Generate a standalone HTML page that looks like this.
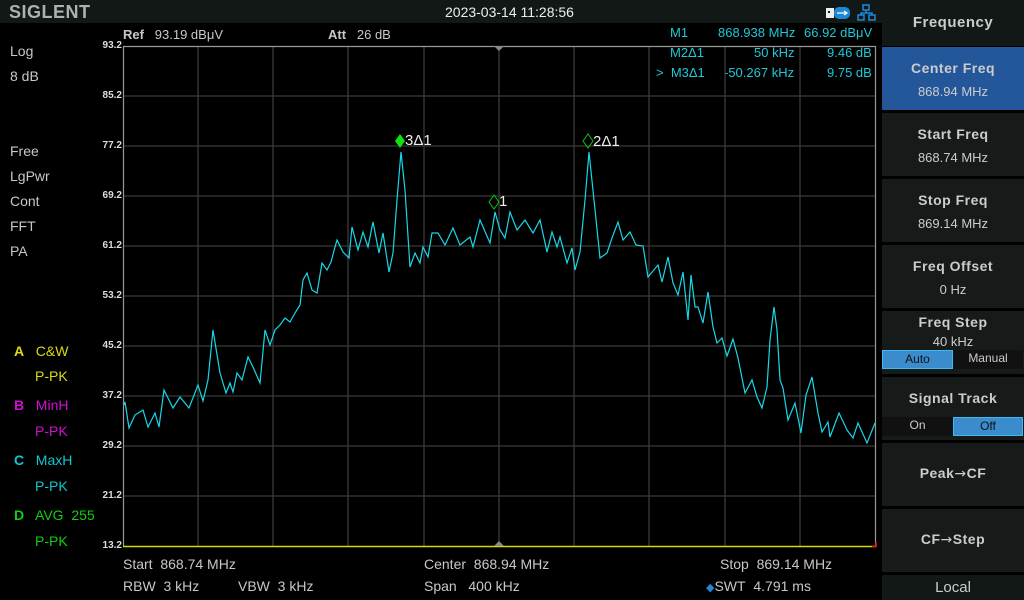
<!DOCTYPE html>
<html><head><meta charset="utf-8"><style>
*{margin:0;padding:0;box-sizing:border-box}
body{width:1024px;height:600px;background:#000;overflow:hidden;position:relative;font-family:"Liberation Sans",Arial,sans-serif;color:#ddd}
.a{position:absolute;white-space:nowrap}
.top{left:0;top:0;width:882px;height:23px;background:#111816}
.lbl{font-size:14px;color:#c8c8c8}
.yl{font-size:10px;font-weight:bold;color:#ddd;right:902px}
.cy{color:#1ec8d8;font-size:13px}
.rp{left:882px;top:0;width:142px;height:600px;background:#000}
.btn{position:absolute;left:882px;width:142px;background:#161a18;text-align:center;color:#ccc}
.bt{font-size:14px;font-weight:bold;letter-spacing:.5px}
.bv{font-size:13px}
.ar{font-family:"DejaVu Sans",sans-serif;font-weight:normal;font-size:14px}
</style></head><body>
<div class="a top"></div>
<div class="a" style="left:9px;top:2px;font-size:18px;font-weight:bold;color:#b0b0b0;letter-spacing:0.5px">SIGLENT</div>
<div class="a" style="left:445px;top:4px;font-size:14px;color:#eee">2023-03-14 11:28:56</div>
<svg class="a" style="left:825px;top:4px" width="55" height="18">
<rect x="1" y="4" width="8" height="10" fill="#eee"/><rect x="3" y="7" width="2" height="2" fill="#111"/>
<rect x="9" y="3" width="16" height="12" rx="5" fill="#1e88d8"/>
<path d="M12 9h10M19 7l3 2-3 2" stroke="#fff" stroke-width="1.2" fill="none"/>
<g stroke="#1e88d8" stroke-width="1.5" fill="none"><rect x="38" y="1" width="6" height="5"/><rect x="33" y="11" width="6" height="5"/><rect x="44" y="11" width="6" height="5"/><path d="M41 6v3M36 11V9h11v2"/></g>
</svg>
<div class="a lbl" style="left:123px;top:27px;font-size:13px"><b>Ref</b>&nbsp;&nbsp; 93.19 dBμV</div>
<div class="a lbl" style="left:328px;top:27px;font-size:13px"><b>Att</b>&nbsp;&nbsp; 26 dB</div>
<div class="a cy" style="left:670px;top:25px">M1</div>
<div class="a cy" style="left:718px;top:25px">868.938 MHz</div>
<div class="a cy" style="left:804px;top:25px">66.92 dBμV</div>
<div class="a cy" style="left:670px;top:45px">M2Δ1</div>
<div class="a cy" style="left:754px;top:45px">50 kHz</div>
<div class="a cy" style="left:827px;top:45px">9.46 dB</div>
<div class="a cy" style="left:656px;top:65px">&gt;&nbsp; M3Δ1</div>
<div class="a cy" style="left:724px;top:65px">-50.267 kHz</div>
<div class="a cy" style="left:827px;top:65px">9.75 dB</div>

<div class="a lbl" style="left:10px;top:43px">Log</div>
<div class="a lbl" style="left:10px;top:68px">8 dB</div>
<div class="a lbl" style="left:10px;top:143px">Free</div>
<div class="a lbl" style="left:10px;top:168px">LgPwr</div>
<div class="a lbl" style="left:10px;top:193px">Cont</div>
<div class="a lbl" style="left:10px;top:218px">FFT</div>
<div class="a lbl" style="left:10px;top:243px">PA</div>
<div class="a" style="left:14px;top:343px;font-size:14px;color:#dcdc10"><b>A</b>&nbsp;&nbsp; C&amp;W</div>
<div class="a" style="left:35px;top:368px;font-size:14px;color:#dcdc10">P-PK</div>
<div class="a" style="left:14px;top:397px;font-size:14px;color:#d010d0"><b>B</b>&nbsp;&nbsp; MinH</div>
<div class="a" style="left:35px;top:423px;font-size:14px;color:#d010d0">P-PK</div>
<div class="a" style="left:14px;top:452px;font-size:14px;color:#10c8d0"><b>C</b>&nbsp;&nbsp; MaxH</div>
<div class="a" style="left:35px;top:478px;font-size:14px;color:#10c8d0">P-PK</div>
<div class="a" style="left:14px;top:507px;font-size:14px;color:#10d010"><b>D</b>&nbsp;&nbsp; AVG&nbsp; 255</div>
<div class="a" style="left:35px;top:533px;font-size:14px;color:#10d010">P-PK</div>

<div class="a yl" style="top:40px">93.2</div>
<div class="a yl" style="top:90px">85.2</div>
<div class="a yl" style="top:140px">77.2</div>
<div class="a yl" style="top:190px">69.2</div>
<div class="a yl" style="top:240px">61.2</div>
<div class="a yl" style="top:290px">53.2</div>
<div class="a yl" style="top:340px">45.2</div>
<div class="a yl" style="top:390px">37.2</div>
<div class="a yl" style="top:440px">29.2</div>
<div class="a yl" style="top:490px">21.2</div>
<div class="a yl" style="top:540px">13.2</div>

<svg class="a" style="left:0;top:0" width="882" height="600">
<g stroke="#3a3a3a" stroke-width="1.3">
<path d="M198 46V546M273 46V546M348 46V546M424 46V546M499 46V546M574 46V546M649 46V546M725 46V546M800 46V546"/>
<path d="M123 96H875M123 146H875M123 196H875M123 246H875M123 296H875M123 346H875M123 396H875M123 446H875M123 496H875"/>
</g>
<path d="M123.5 46V546M123 46.5H875.5V546" stroke="#999" stroke-width="1.2" fill="none"/>
<path d="M123 546.5H875" stroke="#d8d800" stroke-width="1.5"/>
<path d="M872 546.5H876V542" stroke="#e02020" stroke-width="1.5" fill="none"/>
<path d="M494 46l5 5 5-5zM494 546l5-5 5 5z" fill="#888"/>
<polyline fill="none" stroke="#18d8e8" stroke-width="1.2" points="124,405 125,402 129,428 135,415 143,410 148,427 155,413 159,427 164,390 173,408 180,397 189,408 198,385 203,401 208,380 213,330 220,373 226,393 230,383 233,392 237,373 242,380 248,357 253,367 260,383 265,330 270,345 275,330 280,325 285,318 290,322 295,313 300,305 303,280 307,273 312,290 317,293 322,263 327,270 331,262 335,247 337,240 343,252 349,258 352,227 358,250 363,232 368,247 373,222 379,253 383,233 389,272 393,253 397,200 401,152 405,190 410,267 415,253 420,263 423,247 428,257 432,233 438,233 445,245 453,228 460,245 470,237 473,247 480,220 490,243 495,212 500,230 505,238 510,212 517,230 525,220 533,233 540,220 547,252 552,232 557,247 560,237 567,263 572,248 575,270 580,252 585,200 589,152 594,200 600,258 607,253 612,238 618,222 623,240 630,232 636,245 643,246 648,277 658,265 662,282 668,257 673,283 678,295 683,272 688,320 691,275 695,307 698,307 703,323 708,292 713,327 717,343 722,338 727,356 733,339 738,358 745,393 752,380 757,397 762,408 767,387 770,340 774,307 777,330 780,380 783,388 788,420 795,403 801,433 806,395 812,377 818,413 822,432 828,422 830,437 839,413 847,430 853,438 858,423 867,443 875,423"/>
<path d="M400 134l5 7-5 7-5-7z" fill="#10e010"/>
<path d="M588 134l5 7-5 7-5-7z" fill="none" stroke="#10c010" stroke-width="1"/>
<path d="M494 195l5 7-5 7-5-7z" fill="none" stroke="#10c010" stroke-width="1"/>
<text x="405" y="145" fill="#eee" font-size="15" font-family="Liberation Sans">3Δ1</text>
<text x="593" y="146" fill="#eee" font-size="15" font-family="Liberation Sans">2Δ1</text>
<text x="499" y="206" fill="#eee" font-size="15" font-family="Liberation Sans">1</text>
</svg>

<div class="a lbl" style="left:123px;top:556px">Start&nbsp; 868.74 MHz</div>
<div class="a lbl" style="left:123px;top:578px">RBW&nbsp; 3 kHz</div>
<div class="a lbl" style="left:238px;top:578px">VBW&nbsp; 3 kHz</div>
<div class="a lbl" style="left:424px;top:556px">Center&nbsp; 868.94 MHz</div>
<div class="a lbl" style="left:424px;top:578px">Span&nbsp;&nbsp; 400 kHz</div>
<div class="a lbl" style="left:720px;top:556px">Stop&nbsp; 869.14 MHz</div>
<div class="a lbl" style="left:706px;top:578px"><span style="color:#1e88d8;font-size:11px">◆</span>SWT&nbsp; 4.791 ms</div>

<div class="a rp"></div>
<svg class="a" style="left:884px;top:8px" width="10" height="30"><circle cx="4" cy="4" r="2.5" fill="#444"/><circle cx="4" cy="14" r="2.5" fill="#444"/><circle cx="4" cy="24" r="2.5" fill="#444"/></svg>
<div class="btn" style="top:0;height:46px;background:#111816;padding-top:14px"><span class="bt" style="font-size:15px">Frequency</span></div>
<div class="btn" style="top:47px;height:63px;background:#24569a;padding-top:13px"><div class="bt">Center Freq</div><div class="bv" style="margin-top:8px">868.94 MHz</div></div>
<div class="btn" style="top:113px;height:63px;padding-top:13px"><div class="bt">Start Freq</div><div class="bv" style="margin-top:8px">868.74 MHz</div></div>
<div class="btn" style="top:179px;height:63px;padding-top:13px"><div class="bt">Stop Freq</div><div class="bv" style="margin-top:8px">869.14 MHz</div></div>
<div class="btn" style="top:245px;height:63px;padding-top:13px"><div class="bt">Freq Offset</div><div class="bv" style="margin-top:8px">0 Hz</div></div>
<div class="btn" style="top:311px;height:63px;padding-top:3px"><div class="bt">Freq Step</div><div class="bv" style="margin-top:4px">40 kHz</div>
<div style="position:absolute;left:0;top:39px;width:71px;height:19px;background:#3a8ccc;border:1px solid #40b8f0;font-size:12px;color:#111;line-height:17px">Auto</div>
<div style="position:absolute;left:71px;top:39px;width:70px;height:19px;background:#111;font-size:12px;line-height:17px">Manual</div></div>
<div class="btn" style="top:377px;height:63px;padding-top:13px"><div class="bt">Signal Track</div>
<div style="position:absolute;left:0;top:40px;width:71px;height:19px;background:#111;font-size:12px;line-height:17px">On</div>
<div style="position:absolute;left:71px;top:40px;width:70px;height:19px;background:#3a8ccc;border:1px solid #40b8f0;font-size:12px;color:#111;line-height:17px">Off</div></div>
<div class="btn" style="top:443px;height:63px;padding-top:22px"><div class="bt">Peak<span class="ar">→</span>CF</div></div>
<div class="btn" style="top:509px;height:63px;padding-top:22px"><div class="bt">CF<span class="ar">→</span>Step</div></div>
<div class="btn" style="top:575px;height:25px;padding-top:4px;background:#111816"><span style="font-size:15px">Local</span></div>
</body></html>
